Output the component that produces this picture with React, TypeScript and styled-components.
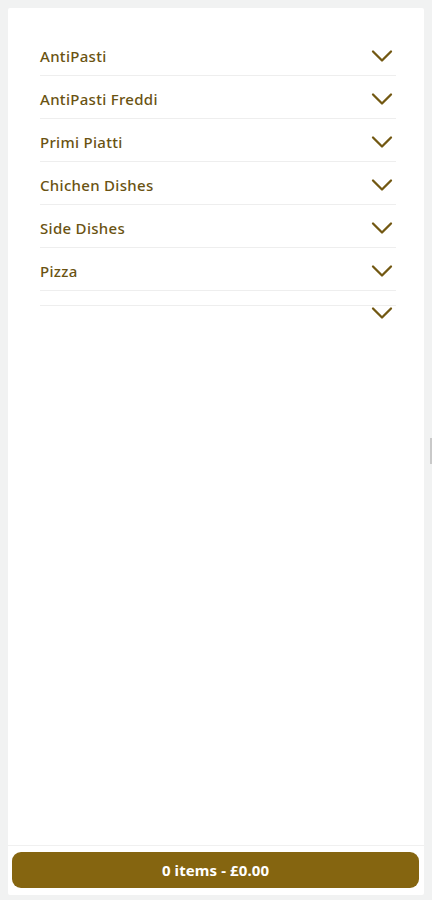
import React from "react";
import styled, { createGlobalStyle } from "styled-components";

const Global = createGlobalStyle`
  html, body {
    margin: 0;
    padding: 0;
    background: #f1f2f2;
    font-family: "Noto Sans", "Open Sans", Arial, sans-serif;
  }
  #root { height: 900px; }
`;

const Page = styled.div`
  height: 900px;
  box-sizing: border-box;
  padding: 8px 8px 5px 8px;
  display: flex;
  position: relative;
`;

const Card = styled.div`
  flex: 1;
  background: #ffffff;
  display: flex;
  flex-direction: column;
  border-radius: 2px;
`;

const List = styled.div`
  flex: 1;
  padding: 25px 28px 0 32px;
  display: flex;
  flex-direction: column;
`;

const Row = styled.div<{ $empty?: boolean }>`
  height: ${(p) => (p.$empty ? "15px" : "43px")};
  box-sizing: border-box;
  border-bottom: 1px solid #eeeeee;
  display: flex;
  align-items: center;
  justify-content: space-between;
  padding-top: ${(p) => (p.$empty ? "0" : "3px")};
`;

const Title = styled.span`
  font-size: 15px;
  font-weight: 500;
  color: #6a5312;
  letter-spacing: 0.3px;
`;

const ChevronBox = styled.span`
  display: flex;
  margin-right: 3px;
`;

const ChevronRow = styled.div`
  display: flex;
  justify-content: flex-end;
  padding: 0;
`;

const Footer = styled.div`
  border-top: 1px solid #f0f0f0;
  padding: 6px 5px 7px 4px;
`;

const CartButton = styled.button`
  width: 100%;
  height: 36px;
  border: none;
  border-radius: 9px;
  background: #856510;
  color: #ffffff;
  font-family: "Noto Sans", "Open Sans", Arial, sans-serif;
  font-size: 15px;
  font-weight: 700;
  letter-spacing: 0.1px;
  display: flex;
  align-items: center;
  justify-content: center;
  padding: 0;
`;

const ScrollMark = styled.div`
  position: absolute;
  right: 0;
  top: 438px;
  width: 2px;
  height: 26px;
  background: #c9c9c9;
`;

const Chevron = () => (
  <ChevronBox>
    <svg width="22" height="14" viewBox="0 0 22 14" fill="none">
      <polyline
        points="2,2.5 11,11.5 20,2.5"
        stroke="#725812"
        strokeWidth="2.3"
        strokeLinecap="round"
        strokeLinejoin="round"
      />
    </svg>
  </ChevronBox>
);

const categories = [
  "AntiPasti",
  "AntiPasti Freddi",
  "Primi Piatti",
  "Chichen Dishes",
  "Side Dishes",
  "Pizza",
];

export default function App() {
  return (
    <>
      <Global />
      <Page>
        <Card>
          <List>
            {categories.map((c) => (
              <Row key={c}>
                <Title>{c}</Title>
                <Chevron />
              </Row>
            ))}
            <Row $empty />
            <ChevronRow>
              <Chevron />
            </ChevronRow>
          </List>
          <Footer>
            <CartButton>0 items - £0.00</CartButton>
          </Footer>
        </Card>
        <ScrollMark />
      </Page>
    </>
  );
}
